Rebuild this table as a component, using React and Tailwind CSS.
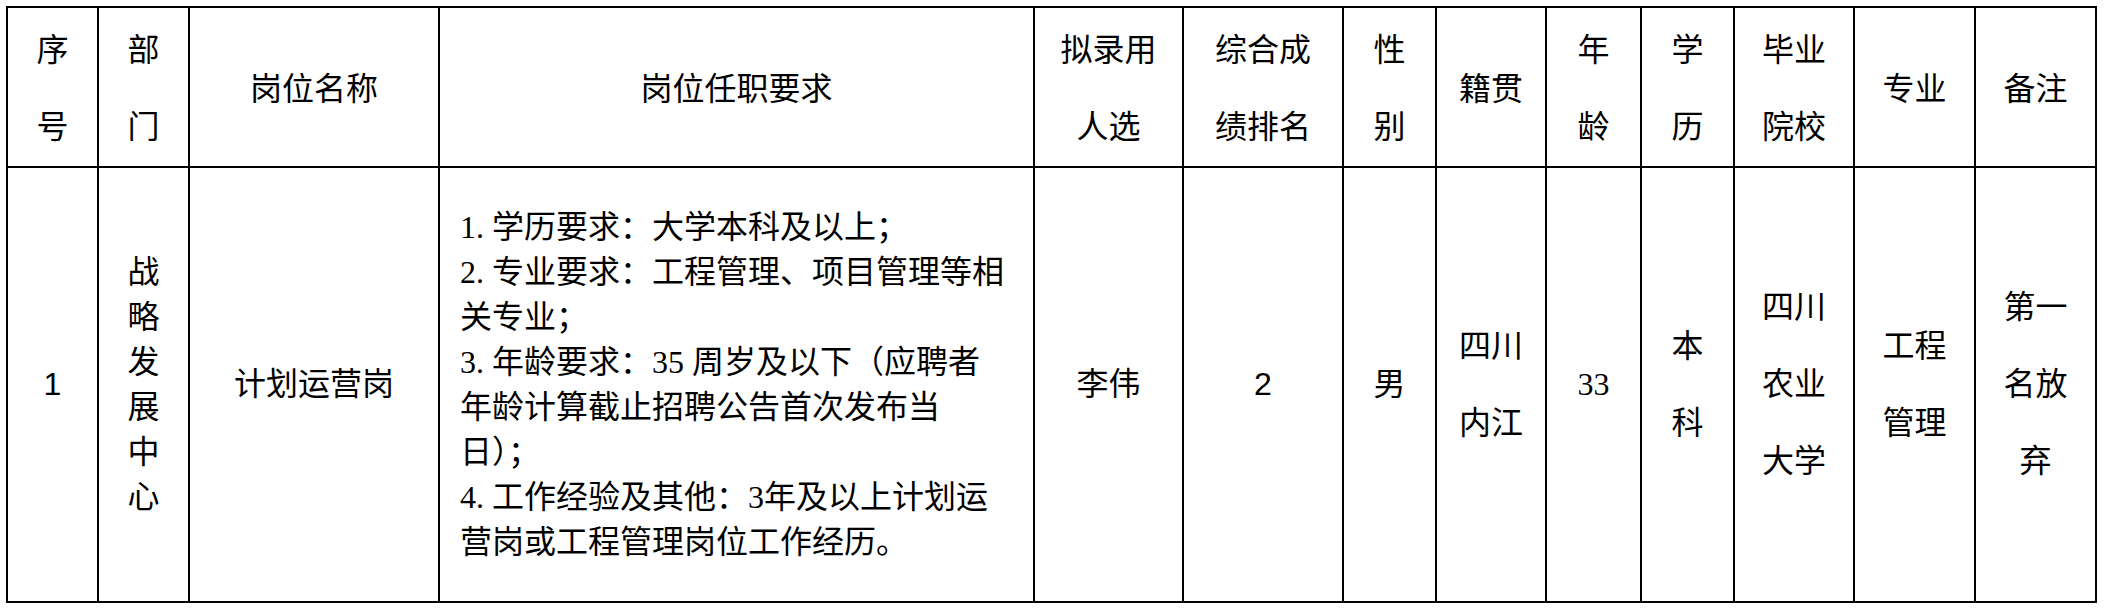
import React from 'react'

const serif = "font-['Liberation_Serif','Noto_Sans_CJK_SC',serif]"
const sans = "font-['Liberation_Sans','Noto_Sans_CJK_SC',sans-serif]"

const widths = ['w-[91px]', 'w-[91px]', 'w-[250px]', 'w-[595px]', 'w-[149px]', 'w-[160px]', 'w-[93px]', 'w-[110px]', 'w-[95px]', 'w-[93px]', 'w-[120px]', 'w-[121px]', 'w-[121px]']

const headers = [
  ['序', '号'],
  ['部', '门'],
  ['岗位名称'],
  ['岗位任职要求'],
  ['拟录用', '人选'],
  ['综合成', '绩排名'],
  ['性', '别'],
  ['籍贯'],
  ['年', '龄'],
  ['学', '历'],
  ['毕业', '院校'],
  ['专业'],
  ['备注'],
]

const requirements = [
  ['1.', '学历要求：大学本科及以上；'],
  ['2.', '专业要求：工程管理、项目管理等相'],
  [null, '关专业；'],
  ['3.', '年龄要求：35 周岁及以下（应聘者'],
  [null, '年龄计算截止招聘公告首次发布当'],
  [null, '日）；'],
  ['4.', '工作经验及其他：3年及以上计划运'],
  [null, '营岗或工程管理岗位工作经历。'],
]

function Lines({ items }) {
  return items.map((t, i) => <div key={i} className="whitespace-nowrap">{t}</div>)
}

function Cell({ children, className = '' }) {
  return (
    <td className={`border-2 border-black p-0 text-center align-middle ${className}`}>
      {children}
    </td>
  )
}

export default function App() {
  return (
    <div className="min-h-[608px] w-[2104px] bg-white pl-[6px] pt-[6px] text-black">
      <table className={`table-fixed border-collapse text-[32px] ${serif}`}>
        <colgroup>
          {widths.map((w, i) => <col key={i} className={w} />)}
        </colgroup>
        <tbody>
          {/* header */}
          <tr className="h-[157px]">
            {headers.map((h, i) => (
              <Cell key={i} className="pt-[4px] leading-[77px]">
                <Lines items={h} />
              </Cell>
            ))}
          </tr>

          {/* body row */}
          <tr className="h-[435px]">
            <Cell className={`leading-[45px] ${sans}`}>1</Cell>
            <Cell className="leading-[45px]">
              <Lines items={['战', '略', '发', '展', '中', '心']} />
            </Cell>
            <Cell className="leading-[45px]">计划运营岗</Cell>
            <Cell className="pl-[20px] text-left leading-[45px]">
              {requirements.map(([num, text], i) => (
                <div key={i} className="whitespace-nowrap">
                  {num && <span className="inline-block w-[32px]">{num}</span>}
                  {text}
                </div>
              ))}
            </Cell>
            <Cell className="leading-[45px]">李伟</Cell>
            <Cell className={`leading-[45px] ${sans}`}>2</Cell>
            <Cell className="leading-[45px]">男</Cell>
            <Cell className="leading-[77px]">
              <Lines items={['四川', '内江']} />
            </Cell>
            <Cell className="leading-[45px]">33</Cell>
            <Cell className="leading-[77px]">
              <Lines items={['本', '科']} />
            </Cell>
            <Cell className="leading-[77px]">
              <Lines items={['四川', '农业', '大学']} />
            </Cell>
            <Cell className="leading-[77px]">
              <Lines items={['工程', '管理']} />
            </Cell>
            <Cell className="leading-[77px]">
              <Lines items={['第一', '名放', '弃']} />
            </Cell>
          </tr>
        </tbody>
      </table>
    </div>
  )
}
